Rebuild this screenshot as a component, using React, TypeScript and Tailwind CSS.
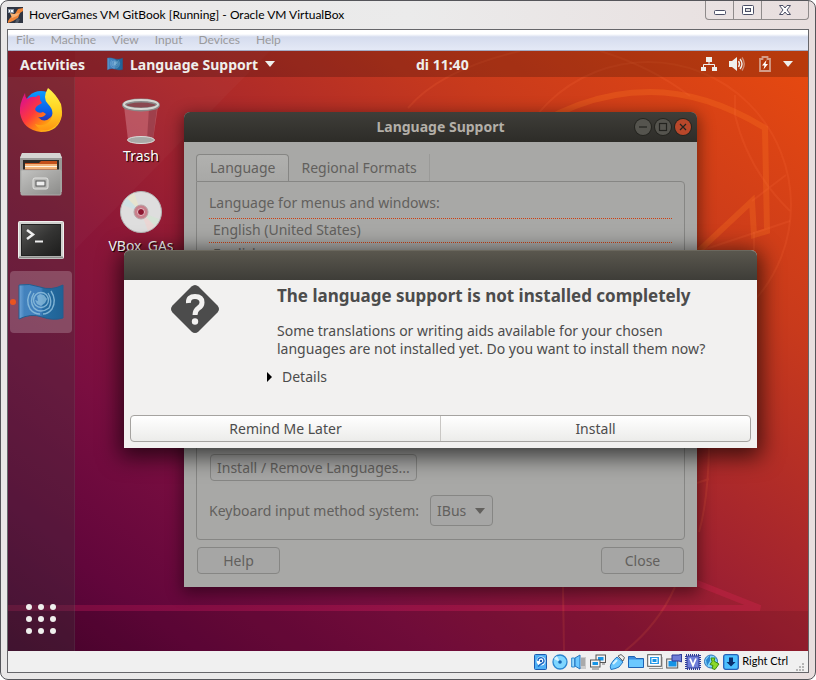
import type { ReactNode } from "react";

const menus = ["File", "Machine", "View", "Input", "Devices", "Help"];

function AppLogo() {
  return (
    <svg viewBox="0 0 16 16" className="h-4 w-4">
      <rect width="16" height="16" fill="#2f3542" />
      <path d="M1 2h6v4H1z" fill="#8d99a8" />
      <path d="M2 3h1v2H2zM4 3h2v2H4z" fill="#fff" />
      <path d="M16 1 11 2 8 7 3 11 1 14v2l5-2 5-3 2-5 3-2z" fill="#f0863a" />
      <path d="M3 6l4 1 6-1-3 3-5 2z" fill="#f8b173" />
      <path d="M10 11l3 1-2 4H8z" fill="#555c69" />
    </svg>
  );
}

function Wallpaper() {
  return (
    <svg viewBox="8 51 800 600" preserveAspectRatio="none" className="absolute inset-0 h-full w-full" fill="none">
      <path d="M8 608H760L697 583Q620 556 540 548" stroke="#ff2a62" strokeOpacity=".2" strokeWidth="6" />
      <path d="M480 170Q560 92 650 92Q706 92 765 128L767 231L754 235L752 201L640 306" stroke="#ff7a20" strokeOpacity=".27" strokeWidth="6" />
      <g stroke="#ff7040" strokeOpacity=".16" strokeWidth="2">
        <circle cx="648" cy="205" r="143" />
        <path d="M408 108Q440 70 520 51M600 51Q650 66 690 96M735 95V115Q748 170 790 211M752 201L786 175M700 251L790 221" />
        <path d="M754 232V260M563 587L564 651M675 587Q658 625 625 651M709 448Q708 500 699 532M697 483L709 479" />
      </g>
      <path d="M75 250L270 51H75Z" fill="#fff" fillOpacity=".025" />
      <path d="M8 611H808V651H8Z" fill="#200" fillOpacity=".1" />
    </svg>
  );
}

function FlagIcon({ className }: { className: string }) {
  return (
    <svg viewBox="0 0 46 38" className={className}>
      <defs>
        <linearGradient id="flag" x1="0" x2="1">
          <stop offset="0" stopColor="#6fa5d8" />
          <stop offset=".12" stopColor="#4382bd" />
          <stop offset=".5" stopColor="#3f7ebb" />
          <stop offset=".55" stopColor="#266da3" />
          <stop offset="1" stopColor="#1f6295" />
        </linearGradient>
      </defs>
      <path d="M1 2Q11 0 22 4T45 2V35Q35 38 24 34T1 36Z" fill="url(#flag)" stroke="#245d8e" />
      <g fill="none" stroke="#8fc0dd" strokeOpacity=".85" strokeWidth="1.4">
        <path d="M13 8Q7 17 12 26Q16 31 22 31M33 8Q39 17 34 26Q30 31 25 31" />
        <path d="M16 10Q11 18 16 25Q19 28 23 28Q27 28 31 25Q35 18 30 10" />
        <circle cx="23" cy="17" r="7.500" />
      </g>
      <path d="M19 13l3-2 4 1 3 4-2 4-4 3-4-2-2-4 3 1z" fill="#8fc0dd" fillOpacity=".75" />
    </svg>
  );
}

function FirefoxIcon() {
  return (
    <svg viewBox="0 0 44 46" className="h-[46px] w-11">
      <defs>
        <linearGradient id="fx" x1=".1" y1=".2" x2=".9" y2=".9">
          <stop offset="0" stopColor="#e3187c" />
          <stop offset=".35" stopColor="#ff3b3a" />
          <stop offset=".65" stopColor="#ff8a12" />
          <stop offset="1" stopColor="#ffd21c" />
        </linearGradient>
        <linearGradient id="fxy" x1="0" y1="0" x2="0" y2="1">
          <stop offset="0" stopColor="#fff44a" />
          <stop offset=".5" stopColor="#ffd422" />
          <stop offset="1" stopColor="#ff9413" />
        </linearGradient>
        <linearGradient id="fxb" x1="0" y1="0" x2="0" y2="1">
          <stop offset="0" stopColor="#0a9cff" />
          <stop offset=".6" stopColor="#0a5ce8" />
          <stop offset="1" stopColor="#3a1e9e" />
        </linearGradient>
      </defs>
      <circle cx="22" cy="21" r="17" fill="url(#fxb)" />
      <path d="M6 6Q6 10 8 12Q12 9 17 10Q19 7 21 9L21 13L23 16L18 19Q15 22 17 24Q20 27 24 25L27 27Q24 31 19 30Q25 37 32 30Q37 24 35 15Q44 21 43 28Q40 45 22 45Q4 43 1 26Q0 17 6 6Z" fill="url(#fx)" />
      <path d="M29 1Q37 7 42 17Q46 35 32 42Q22 46 16 37Q27 41 32 32Q36 24 29 17Q23 11 29 1Z" fill="url(#fxy)" />
    </svg>
  );
}

function FilesIcon() {
  return (
    <svg viewBox="0 0 44 44" className="h-11 w-11">
      <defs>
        <linearGradient id="cab" x1="0" y1="0" x2="1" y2="1">
          <stop offset="0" stopColor="#c3c3c1" />
          <stop offset="1" stopColor="#8b8b89" />
        </linearGradient>
      </defs>
      <path d="M3 1H41L43 6V40H1V6Z" fill="#9a9a98" />
      <path d="M3 1H41L43 6H1Z" fill="#d5d5d3" />
      <rect x="4" y="8" width="36" height="11" fill="#2e2b28" />
      <path d="M6 11h14l2-2h16v10H6z" fill="#c4501b" />
      <path d="M6 13h32M6 16h32" stroke="#f3b47a" strokeWidth="2" />
      <path d="M6 14.500h32" stroke="#fff3e4" />
      <rect x="2" y="18" width="40" height="25" rx="1" fill="url(#cab)" stroke="#adadab" />
      <rect x="14" y="26" width="15" height="11" rx="2" fill="#b9b9b7" stroke="#e3e3e1" />
      <rect x="17" y="29" width="9" height="5" fill="#eee" stroke="#555" />
    </svg>
  );
}

function TerminalIcon() {
  return (
    <svg viewBox="0 0 46 38" className="mt-1 h-[38px] w-[46px]">
      <defs>
        <linearGradient id="trm" x1="0" y1="0" x2="1" y2="1">
          <stop offset="0" stopColor="#5a5a58" />
          <stop offset=".5" stopColor="#343433" />
          <stop offset="1" stopColor="#1d1d1c" />
        </linearGradient>
      </defs>
      <rect x=".5" y=".5" width="45" height="37" rx="1" fill="#d0d0ce" stroke="#f0f0ee" />
      <path d="M1 36.500h44" stroke="#8d8d8b" strokeWidth="2" />
      <rect x="3.500" y="3.500" width="39" height="31" fill="url(#trm)" stroke="#222" />
      <path d="M9 9l6 4.500-6 4.500" fill="none" stroke="#eee" strokeWidth="2.500" />
      <path d="M17 20.500h8" stroke="#eee" strokeWidth="2" />
    </svg>
  );
}

function GridIcon() {
  return (
    <svg viewBox="0 0 30 30" className="h-[30px] w-[30px]" fill="#efefed">
      {[3, 15, 27].map((y) => [3, 15, 27].map((x) => <circle key={`${x}-${y}`} cx={x} cy={y} r="3" />))}
    </svg>
  );
}

function TrashIcon() {
  return (
    <svg viewBox="0 0 40 48" className="h-12 w-10">
      <path d="M3 8L7 42Q20 49 32 42L37 8Z" fill="#d98e9a" fillOpacity=".45" />
      <path d="M28 10L26 42L32 41L36 10Z" fill="#6b1626" fillOpacity=".35" />
      <ellipse cx="20" cy="42" rx="13.500" ry="3.500" fill="#a9a9a7" stroke="#dcdcda" />
      <ellipse cx="20" cy="7" rx="17" ry="4.500" fill="#8a4850" stroke="#8a8a8a" strokeWidth="4" />
      <ellipse cx="20" cy="6.500" rx="17" ry="4.500" fill="none" stroke="#d6d6d2" strokeWidth="2" />
    </svg>
  );
}

function DiscIcon() {
  return (
    <svg viewBox="0 0 44 44" className="mb-0.5 h-11 w-11">
      <circle cx="22" cy="22" r="20.500" fill="#dedede" stroke="#b5b5b5" />
      <path d="M22 22L7 10A20 20 0 0 1 15 3Z" fill="#e6e4cf" />
      <path d="M22 22L4 15A20 20 0 0 1 8 8Z" fill="#cfe2e4" />
      <path d="M22 22L37 34A20 20 0 0 1 29 41Z" fill="#ead6d4" />
      <path d="M22 22L40 29A20 20 0 0 1 36 36Z" fill="#d6e3d6" />
      <circle cx="22" cy="22" r="7" fill="#c9808c" stroke="#b9a5a8" />
      <circle cx="22" cy="22" r="3.500" fill="#8d1630" stroke="#e5c3c8" />
    </svg>
  );
}

function DockItem({ label, active, children }: { label: string; active?: boolean; children: ReactNode }) {
  return (
    <button
      aria-label={label}
      className={`relative flex h-[62px] w-[62px] items-center justify-center ${active ? "rounded bg-white/20" : ""}`}
    >
      {active && <span className="absolute left-0 top-1/2 h-1.5 w-1.5 -translate-y-1/2 rounded-full bg-[#e95420]" />}
      {children}
    </button>
  );
}

function DesktopItem({ label, children }: { label: string; children: ReactNode }) {
  return (
    <button className="flex flex-col items-center text-[14px] leading-5 text-white [text-shadow:1px_1px_1px_#000]">
      {children}
      <span>{label}</span>
    </button>
  );
}

function Caret({ className }: { className: string }) {
  return (
    <svg viewBox="0 0 10 6" className={className} fill="currentColor">
      <path d="M0 0h10L5 6z" />
    </svg>
  );
}

function TopBar() {
  return (
    <header className="relative grid h-[26px] grid-cols-[51%_auto_1fr] items-center bg-black/20 text-[14px] font-bold text-[#efefec] [text-shadow:0_1px_2px_#0008]">
      <div className="flex items-center pl-3">
        <button>Activities</button>
        <button className="ml-[22px] flex items-center gap-[7px]">
          <FlagIcon className="h-[14px] w-4" />
          Language Support
          <Caret className="h-1.5 w-2.5" />
        </button>
      </div>
      <button>di 11:40</button>
      <div className="flex items-center justify-end pr-[15px]">
        <svg viewBox="0 0 16 16" className="h-4 w-4" fill="#efefec">
          <path d="M5 1h6v5H5zM0 11h5v4H0zM11 11h5v4h-5z" />
          <path d="M8 6v3M2.500 12V8.500h11V12" fill="none" stroke="#efefec" />
        </svg>
        <svg viewBox="0 0 16 16" className="ml-3 h-4 w-4" fill="#efefec">
          <path d="M0 5h3l5-4v14l-5-4H0z" />
          <path d="M9.500 5q2 3 0 6M11 3q4 5 0 10" fill="none" stroke="#efefec" strokeWidth="1.400" />
          <path d="M13 1.500q4.500 6.500 0 13" fill="none" stroke="#efefec" strokeOpacity=".45" strokeWidth="1.400" />
        </svg>
        <svg viewBox="0 0 12 16" className="ml-[14px] h-4 w-3">
          <path d="M1 3h2.500V1h5v2H11v12H1z" fill="none" stroke="#efefec" strokeOpacity=".55" strokeWidth="1.800" />
          <path d="M7.500 4L3 9.500h2.500L4.500 13.500 9 8H6.500z" fill="#fff" />
        </svg>
        <Caret className="ml-3 h-1.5 w-2.5" />
      </div>
    </header>
  );
}

function WindowControl({ label, className, children }: { label: string; className: string; children: ReactNode }) {
  return (
    <button aria-label={label} className={`flex h-4 w-4 items-center justify-center rounded-full ring-1 ring-[#24241f] ${className}`}>
      <svg viewBox="0 0 10 10" className="h-2.5 w-2.5" fill="none" stroke="#23231f" strokeWidth="1.200">
        {children}
      </svg>
    </button>
  );
}

const boxed = "rounded border border-[#868684] bg-[#a6a6a5]";
const languageRow = "border-t border-dotted border-[#cc3f12] pb-px pl-1";

function LanguageSupportWindow() {
  return (
    <section className="absolute left-[109px] top-[35px] flex h-[475px] w-[513px] flex-col rounded-t-md bg-[#a8a8a6] text-[14px] leading-5 text-[#62605d] shadow-[0_4px_16px_2px_rgba(0,0,0,0.45)]">
      <header className="grid h-[30px] grid-cols-[1fr_auto_1fr] items-center rounded-t-md bg-linear-to-b from-[#3f3e39] to-[#2d2c28] font-bold text-[#b3afa8]">
        <span />
        <h2>Language Support</h2>
        <div className="flex justify-end gap-1 pr-1.5">
          <WindowControl label="Minimize" className="bg-[#55544e]">
            <path d="M1 5h8" />
          </WindowControl>
          <WindowControl label="Maximize" className="bg-[#55544e]">
            <rect x="1.500" y="1.500" width="7" height="7" />
          </WindowControl>
          <WindowControl label="Close window" className="bg-[#b8472a]">
            <path d="M2 2l6 6M8 2l-6 6" />
          </WindowControl>
        </div>
      </header>
      <div className="flex flex-1 flex-col px-3 pb-[13px] pt-3">
        <div className="flex h-[27px]" role="tablist">
          <button role="tab" aria-selected="true" className="rounded-t border border-b-0 border-[#868684] bg-linear-to-b from-[#b1b1af] to-[#a8a8a6] px-[13px]">
            Language
          </button>
          <button role="tab" aria-selected="false" className="border-r border-[#9a9a98] px-3">
            Regional Formats
          </button>
        </div>
        <div className="flex flex-1 flex-col rounded-b rounded-tr border border-[#868684] px-3 pb-[13px] pt-[11px]">
          <h3>Language for menus and windows:</h3>
          <ul className="mt-[5px] flex-1 leading-[22px]">
            <li className={languageRow}>English (United States)</li>
            <li className={languageRow}>English</li>
          </ul>
          <button className={`ml-px h-[27px] self-start px-1.5 ${boxed}`}>Install / Remove Languages...</button>
          <div className="mt-3.5 flex items-center gap-[11px]">
            <label htmlFor="ime">Keyboard input method system:</label>
            <div className="relative">
              <select id="ime" className={`h-[31px] w-[63px] appearance-none pl-1.5 ${boxed}`}>
                <option>IBus</option>
              </select>
              <Caret className="pointer-events-none absolute right-2 top-[13px] h-1.5 w-2.5" />
            </div>
          </div>
        </div>
        <div className="mt-[7px] flex justify-between px-px">
          <button className={`h-[27px] w-[83px] ${boxed}`}>Help</button>
          <button className={`h-[27px] w-[83px] ${boxed}`}>Close</button>
        </div>
      </div>
    </section>
  );
}

function InstallDialog() {
  return (
    <section role="dialog" aria-labelledby="dialog-title" className="absolute left-[49px] top-[173px] w-[633px] rounded-t-md bg-[#f2f1f0] text-[14px] text-[#4c4c4c] shadow-[0_5px_22px_4px_rgba(0,0,0,0.65)]">
      <div className="h-[30px] rounded-t-md border-t border-[#6b685e] bg-linear-to-b from-[#5a574e] to-[#3e3d38]" />
      <div className="flex gap-[46px] pb-7 pl-[47px] pt-1">
        <svg viewBox="0 0 48 48" className="mt-px h-12 w-12 shrink-0">
          <path d="M20.500 1.500Q24-1.500 27.500 1.500L46.500 20.500Q49.500 24 46.500 27.500L27.500 46.500Q24 49.500 20.500 46.500L1.500 27.500Q-1.500 24 1.500 20.500Z" fill="#4c4c4c" />
          <path d="M17.500 18Q17 11.500 24 11.500T31 17.500Q31 21 27.500 23Q24 25.500 24 30" fill="none" stroke="#f2f1f0" strokeWidth="5" />
          <circle cx="24" cy="36.500" r="3.200" fill="#f2f1f0" />
        </svg>
        <div>
          <h1 id="dialog-title" className="pl-3 text-[17px] font-bold leading-6">
            The language support is not installed completely
          </h1>
          <p className="mt-3.5 pl-3 leading-[18px]">
            Some translations or writing aids available for your chosen
            <br />
            languages are not installed yet. Do you want to install them now?
          </p>
          <button className="mt-[9px] flex items-center gap-2.5 pl-0.5 leading-5">
            <svg viewBox="0 0 5 10" className="h-2.5 w-[5px]">
              <path d="M0 0l5 5-5 5z" />
            </svg>
            Details
          </button>
        </div>
      </div>
      <div className="px-1.5 pb-1.5">
        <div className="flex h-[27px] divide-x divide-[#c9c7c4] overflow-hidden rounded border border-[#a5a3a0] bg-linear-to-b from-white to-[#ececea]">
          <button className="flex-1">Remind Me Later</button>
          <button className="flex-1">Install</button>
        </div>
      </div>
    </section>
  );
}

function StatusIcon({ label, children }: { label: string; children: ReactNode }) {
  return (
    <button aria-label={label} className="h-4 w-4">
      <svg viewBox="0 0 16 16" className="h-4 w-4">
        {children}
      </svg>
    </button>
  );
}

function StatusBar() {
  return (
    <footer className="flex h-[21px] items-center justify-end gap-[3px] bg-[#f0f0f0] pr-[3px]">
      <StatusIcon label="Hard disks">
        <rect x="1.500" y=".5" width="12" height="15" rx="1" fill="#4fb0f5" stroke="#1c5bb0" />
        <circle cx="8" cy="7" r="4.500" fill="#fff" />
        <path d="M5 7a3 3 0 1 1 4 2.500q-2 1-4 3" fill="none" stroke="#1c6cc8" strokeWidth="1.400" />
        <circle cx="8" cy="7" r="1.200" fill="#1c5bb0" />
      </StatusIcon>
      <StatusIcon label="Optical drives">
        <circle cx="8" cy="8" r="7" fill="#7fd6ff" stroke="#2a86d0" strokeWidth="1.300" />
        <path d="M8 8L2 5a7 7 0 0 1 3-3z" fill="#d3f3ff" />
        <circle cx="8" cy="8" r="1.800" fill="#1666b5" />
      </StatusIcon>
      <StatusIcon label="Audio">
        <path d="M10 3h5v12H8v-2h2z" fill="#ccc" />
        <path d="M10 5h4M10 7h4M10 9h4M10 11h4" stroke="#888" />
        <path d="M.7 4h3v9h-3z" fill="#9adcff" stroke="#2a86d0" />
        <path d="M4 4l5-3v14l-5-3z" fill="#6cc8ff" stroke="#2474c0" />
      </StatusIcon>
      <StatusIcon label="Network">
        <rect x="6" y="1" width="9.500" height="7.500" fill="#f2f2f2" stroke="#555" />
        <rect x="8" y="3" width="5.500" height="3.500" fill="#1594e6" />
        <rect x=".5" y="6" width="9.500" height="7" fill="#f2f2f2" stroke="#555" />
        <rect x="2.500" y="8" width="5.500" height="3" fill="#1594e6" />
        <path d="M2 15h7M12 10h3" stroke="#777" />
      </StatusIcon>
      <StatusIcon label="USB">
        <path d="M9 2l3-1.500 3.500 3L14 7z" fill="#eee" stroke="#666" />
        <path d="M8 3l6 5-4 5q-4 2-8 2.500Q.5 13 2 10q3-5 6-7z" fill="#6cc8ff" stroke="#2474c0" />
        <path d="M4 10l4-4" stroke="#d8f3ff" strokeWidth="2" />
      </StatusIcon>
      <StatusIcon label="Shared folders">
        <path d="M.5 2.500h6l1.500 2H15.500v9H.5z" fill="#3b8de0" stroke="#1f62b4" />
        <path d="M1 5.500h14V13H1z" fill="#6cc8ff" />
      </StatusIcon>
      <StatusIcon label="Display">
        <path d="M2 14.500h14V3" fill="none" stroke="#999" />
        <rect x=".7" y=".7" width="13.600" height="11.600" fill="#fff" stroke="#555" />
        <rect x="3" y="3" width="9" height="7" fill="#2a9ae8" />
        <rect x="5" y="4.500" width="5" height="4" fill="#1594e6" stroke="#fff" />
      </StatusIcon>
      <StatusIcon label="Recording">
        <rect x=".7" y="5" width="11" height="9" fill="#eee" stroke="#555" />
        <rect x="2.500" y="7" width="8" height="5.500" fill="#1594e6" />
        <path d="M6 1h7l2.500-1v8L13 7H6z" fill="#6f7fd8" stroke="#2d3b98" />
      </StatusIcon>
      <StatusIcon label="Processor">
        <rect x="1" y="1" width="14" height="14" fill="none" stroke="#2d3b98" strokeWidth="2" strokeDasharray="1 1" />
        <rect x="2" y="2" width="12" height="12" rx="1" fill="#6f7fd8" stroke="#2d3b98" />
        <path d="M5 4.500l3 7 3-7" fill="none" stroke="#fff" strokeWidth="1.800" />
      </StatusIcon>
      <StatusIcon label="Mouse integration">
        <circle cx="7" cy="7.500" r="6.500" fill="#7fd6ff" stroke="#2a70b8" />
        <path d="M2 6l4-5v6l-3 5z" fill="#2a86d0" />
        <path d="M7 4h4l-1 3 5 3-4 5.500-3-1 1-3-3-1 2-3z" fill="#8bd82a" stroke="#3d8a14" />
      </StatusIcon>
      <StatusIcon label="Keyboard capture">
        <rect x=".7" y=".7" width="14.600" height="14.600" rx="2" fill="#4cc0ff" stroke="#2460b8" strokeWidth="1.300" />
        <path d="M6 3.500h4V8h2.500L8 12.500 3.500 8H6z" fill="#0a2f6e" />
      </StatusIcon>
      <span className="font-[Lato,sans-serif] text-[11px] text-black">Right Ctrl</span>
      <svg viewBox="0 0 9 9" className="ml-[5px] h-[9px] w-[9px] self-end" fill="#b5b5b5">
        <path d="M6 0h2v2H6zM3 3h2v2H3zM6 3h2v2H6zM0 6h2v2H0zM3 6h2v2H3zM6 6h2v2H6z" />
      </svg>
    </footer>
  );
}

function TitleBar() {
  return (
    <header className="flex h-7 items-center">
      <AppLogo />
      <h1 className="ml-1.5 flex-1 text-[12px] text-black">HoverGames VM GitBook [Running] - Oracle VM VirtualBox</h1>
      <div className="flex h-[19px] divide-x divide-[#8f8b8b] self-start rounded-b border border-t-0 border-[#8f8b8b]">
        <button aria-label="Minimize" className="flex w-7 items-center justify-center">
          <svg viewBox="0 0 12 5" className="mt-1 h-[5px] w-3">
            <rect x=".5" y=".5" width="11" height="4" rx="1" fill="#fff" stroke="#4b4f66" />
          </svg>
        </button>
        <button aria-label="Maximize" className="flex w-7 items-center justify-center">
          <svg viewBox="0 0 12 10" className="h-2.5 w-3">
            <rect x=".5" y=".5" width="11" height="9" rx="1" fill="#fff" stroke="#4b4f66" />
            <rect x="3.500" y="3.500" width="5" height="3" fill="#ddd" stroke="#4b4f66" />
          </svg>
        </button>
        <button aria-label="Close" className="flex w-[46px] items-center justify-center">
          <svg viewBox="0 0 12 10" className="h-2.5 w-3">
            <path d="M.5.5h3.500L6 3l2-2.500h3.500L8 5l3.500 4.500H8L6 7 4 9.500H.5L4 5z" fill="#fff" stroke="#4b4f66" />
          </svg>
        </button>
      </div>
    </header>
  );
}

export default function App() {
  return (
    <div className="flex min-h-screen flex-col rounded-lg border border-[#55555a] bg-linear-to-r from-[#e9e7e7] via-[#ebebeb] to-[#e8dede] px-1.5 pb-1.5 font-[Lato,sans-serif]">
      <TitleBar />
      <div className="flex flex-1 flex-col border border-[#66666a]">
        <nav className="flex h-[21px] items-center gap-4 border-b border-[#a3abc4] bg-linear-to-b from-white from-20% via-[#d5dcee] via-35% to-[#e4e9f6] px-2 text-[12px] text-[#9a9a9c]">
          {menus.map((m) => (
            <button key={m}>{m}</button>
          ))}
        </nav>
        <main className="relative flex min-h-[600px] flex-1 flex-col overflow-hidden bg-[linear-gradient(to_top_right,#480330,#62063b_12%,#7a0e40_27%,#8a1638_40%,#a02230_52%,#c83a1c_76%,#e84a0f)] font-['Noto_Sans',sans-serif]">
          <Wallpaper />
          <TopBar />
          <div className="relative flex flex-1">
            <aside className="flex w-[67px] flex-col items-center gap-0.5 border-r border-white/5 bg-[#3c3c3c]/30 pb-[17px] pt-0.5">
              <DockItem label="Firefox">
                <FirefoxIcon />
              </DockItem>
              <DockItem label="Files">
                <FilesIcon />
              </DockItem>
              <DockItem label="Terminal">
                <TerminalIcon />
              </DockItem>
              <DockItem label="Language Support" active>
                <FlagIcon className="h-[38px] w-[46px]" />
              </DockItem>
              <button aria-label="Show applications" className="mt-auto">
                <GridIcon />
              </button>
            </aside>
            <div className="relative flex-1">
              <div className="flex w-[132px] flex-col items-center gap-6 pt-[21px]">
                <DesktopItem label="Trash">
                  <TrashIcon />
                </DesktopItem>
                <DesktopItem label="VBox_GAs">
                  <DiscIcon />
                </DesktopItem>
              </div>
              <LanguageSupportWindow />
              <InstallDialog />
            </div>
          </div>
        </main>
        <StatusBar />
      </div>
    </div>
  );
}
